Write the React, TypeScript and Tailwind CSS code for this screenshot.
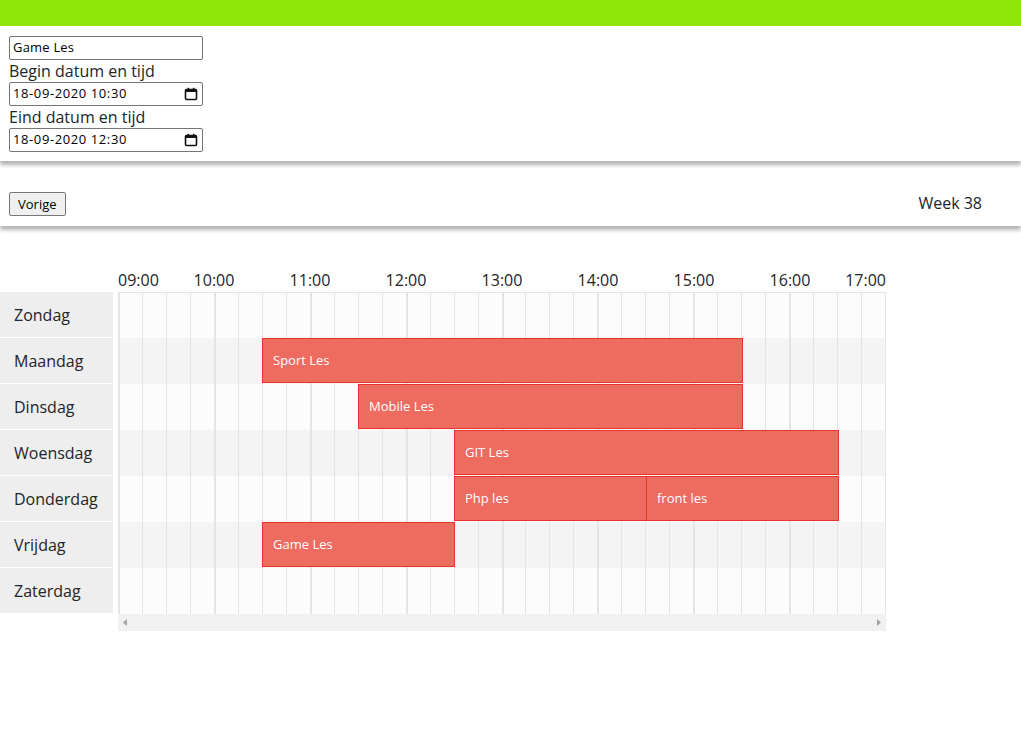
import React from "react";

const days = ["Zondag", "Maandag", "Dinsdag", "Woensdag", "Donderdag", "Vrijdag", "Zaterdag"];
const hours = ["09:00", "10:00", "11:00", "12:00", "13:00", "14:00", "15:00", "16:00", "17:00"];

type Ev = { day: number; start: number; end: number; title: string };
const events: Ev[] = [
  { day: 1, start: 10.5, end: 15.5, title: "Sport Les" },
  { day: 2, start: 11.5, end: 15.5, title: "Mobile Les" },
  { day: 3, start: 12.5, end: 16.5, title: "GIT Les" },
  { day: 4, start: 12.5, end: 14.5, title: "Php les" },
  { day: 4, start: 14.5, end: 16.5, title: "front les" },
  { day: 5, start: 10.5, end: 12.5, title: "Game Les" },
];

function Calendar() {
  return (
    <svg width="14" height="14" viewBox="0 0 14 14" className="block">
      <rect x="1.5" y="2.5" width="11" height="10" rx="1" fill="none" stroke="#111" strokeWidth="1.6" />
      <rect x="1.5" y="2.5" width="11" height="2.5" fill="#111" />
      <rect x="3.5" y="0.8" width="1.6" height="2.4" fill="#111" />
      <rect x="8.9" y="0.8" width="1.6" height="2.4" fill="#111" />
    </svg>
  );
}

function DateField({ value }: { value: string }) {
  return (
    <div className="w-[194px] h-[24px] border border-[#767676] rounded-[2px] flex items-center justify-between pl-[3px] pr-[4px] text-[13px] text-black bg-white">
      <span className="tracking-[0.6px]">{value}</span>
      <Calendar />
    </div>
  );
}

export default function App() {
  return (
    <div className="min-h-[744px] bg-white text-[#212529] font-['Open_Sans',sans-serif]">
      <div className="h-[26px] bg-[#8fe60b]" />
      <div className="px-[9px] pt-[10px] pb-[9px] bg-white shadow-[0_4px_4px_rgba(0,0,0,0.3)] relative z-10">
        <div className="w-[194px] h-[24px] border border-[#767676] rounded-[2px] flex items-center pl-[3px] text-[13px] text-black tracking-[0.2px]">
          Game Les
        </div>
        <div className="text-[16px] leading-[22px]">Begin datum en tijd</div>
        <DateField value="18-09-2020 10:30" />
        <div className="text-[16px] leading-[22px]">Eind datum en tijd</div>
        <DateField value="18-09-2020 12:30" />
      </div>
      <div className="mt-[7px] h-[58px] px-[9px] pt-[24px] bg-white shadow-[0_4px_4px_rgba(0,0,0,0.3)] relative z-10 flex justify-between">
        <button className="h-[24px] px-[8px] border border-[#767676] rounded-[2px] bg-[#efefef] text-[13px] text-black leading-none">
          Vorige
        </button>
        <div className="text-[16px] mr-[30px] mt-[-1px]">Week 38</div>
      </div>

      <div className="mt-[40px] flex">
        <div className="w-[113px] pt-[26px] mr-[5px]">
          {days.map((d) => (
            <div key={d} className="h-[46px] bg-[#eeeeee] border-b border-white flex items-center pl-[14px] text-[16px]">
              {d}
            </div>
          ))}
        </div>
        <div className="w-[768px]">
          <div className="relative h-[26px] text-[16px]">
            {hours.map((h, i) => {
              const x = i * 96;
              const cls =
                i === 0
                  ? "absolute top-[2px] left-0"
                  : i === hours.length - 1
                  ? "absolute top-[2px] right-0"
                  : "absolute top-[2px] -translate-x-1/2";
              return (
                <div key={h} className={cls} style={i > 0 && i < hours.length - 1 ? { left: x } : undefined}>
                  {h}
                </div>
              );
            })}
          </div>
          <div className="border-t border-r border-[#e4e4e4]">
            {days.map((d, r) => (
              <div
                key={d}
                className={`relative flex ${r === 0 ? "h-[45px]" : "h-[46px]"} ${r % 2 === 1 ? "bg-[#f4f4f4]" : "bg-[#fcfcfc]"}`}
              >
                {Array.from({ length: 32 }).map((_, c) => (
                  <div
                    key={c}
                    className={`w-[24px] h-full border-[#e4e4e4] ${c % 4 === 0 ? "border-l-2" : "border-l"}`}
                  />
                ))}
                {events
                  .filter((e) => e.day === r)
                  .map((e) => (
                    <div
                      key={e.title}
                      className="absolute top-0 h-[45px] bg-[#ed6b5f] border border-[#e8332a] text-white text-[13px] flex items-center pl-[10px]"
                      style={{ left: (e.start - 9) * 96, width: (e.end - e.start) * 96 + 1 }}
                    >
                      {e.title}
                    </div>
                  ))}
              </div>
            ))}
          </div>
          <div className="h-[17px] bg-[#f1f1f1] flex items-center justify-between px-[5px]">
            <svg width="4" height="7" viewBox="0 0 4 7"><path d="M4 0 L0 3.5 L4 7 Z" fill="#a3a3a3" /></svg>
            <svg width="4" height="7" viewBox="0 0 4 7"><path d="M0 0 L4 3.5 L0 7 Z" fill="#a3a3a3" /></svg>
          </div>
        </div>
      </div>
    </div>
  );
}
